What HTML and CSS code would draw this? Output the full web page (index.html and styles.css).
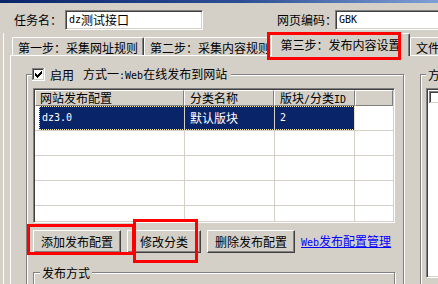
FILE: index.html
```html
<!DOCTYPE html>
<html lang="zh-CN">
<head>
<meta charset="utf-8">
<title>发布内容设置</title>
<link rel="stylesheet" href="styles.css">
</head>
<body>
<div class="titlebar"></div>
<div class="top">
  <span class="lbl lbl-task">任务名：</span>
  <div class="field in in-task"><span class="lat">dz</span>测试接口</div>
  <span class="lbl lbl-enc">网页编码：</span>
  <div class="field in in-enc"><span class="lat">GBK</span></div>
</div>
<div class="frame">
  <div class="tabs">
    <div class="tab t1">第一步：采集网址规则</div>
    <div class="tab t2">第二步：采集内容规则</div>
    <div class="tab t3">第三步：发布内容设置</div>
    <div class="tab t4">文件保存及部分高级设置</div>
  </div>
  <div class="panel">
    <fieldset class="grp main">
      <legend class="lg-main">
        <svg class="cb" width="13" height="13" viewBox="0 0 13 13">
          <rect x="0" y="0" width="13" height="13" fill="#fff"/>
          <rect x="0" y="0" width="12" height="1" fill="#808080"/>
          <rect x="0" y="0" width="1" height="12" fill="#808080"/>
          <rect x="1" y="1" width="10" height="1" fill="#404040"/>
          <rect x="1" y="1" width="1" height="10" fill="#404040"/>
          <rect x="1" y="11" width="11" height="1" fill="#d4d0c8"/>
          <rect x="11" y="1" width="1" height="11" fill="#d4d0c8"/>
          <rect x="3" y="5" width="1" height="3" fill="#000"/>
          <rect x="4" y="6" width="1" height="3" fill="#000"/>
          <rect x="5" y="7" width="1" height="3" fill="#000"/>
          <rect x="6" y="6" width="1" height="3" fill="#000"/>
          <rect x="7" y="5" width="1" height="3" fill="#000"/>
          <rect x="8" y="4" width="1" height="3" fill="#000"/>
          <rect x="9" y="3" width="1" height="3" fill="#000"/>
        </svg>
        <span class="en">启用</span>
        <span class="way">方式一<span class="lat">:Web</span>在线发布到网站</span>
      </legend>
      <div class="field list">
        <div class="lhead">
          <div class="hc h1">网站发布配置</div>
          <div class="hc h2">分类名称</div>
          <div class="hc h3">版块<span class="lat">/</span>分类<span class="lat">ID</span></div>
          <div class="hc h4"></div>
        </div>
        <div class="row sel">
          <div class="sp"></div>
          <div class="selbox">
            <div class="c c1"><span class="lat">dz3.0</span></div>
            <div class="c c2">默认版块</div>
            <div class="c c3"><span class="lat">2</span></div>
          </div>
        </div>
        <div class="row">
          <div class="sp"></div>
          <div class="selbox"><div class="c c1"></div><div class="c c2"></div><div class="c c3"></div></div>
        </div>
        <div class="row">
          <div class="sp"></div>
          <div class="selbox"><div class="c c1"></div><div class="c c2"></div><div class="c c3"></div></div>
        </div>
        <div class="row">
          <div class="sp"></div>
          <div class="selbox"><div class="c c1"></div><div class="c c2"></div><div class="c c3"></div></div>
        </div>
        <div class="row">
          <div class="sp"></div>
          <div class="selbox"><div class="c c1"></div><div class="c c2"></div><div class="c c3"></div></div>
        </div>
      </div>
      <div class="btns">
        <div class="btn b-add">添加发布配置</div>
        <div class="btn b-mod">修改分类</div>
        <div class="btn b-del">删除发布配置</div>
        <span class="link"><span class="lat">Web</span>发布配置管理</span>
      </div>
      <fieldset class="grp sub">
        <legend class="lg-sub">发布方式</legend>
      </fieldset>
    </fieldset>
    <fieldset class="grp side">
      <legend class="lg-side">方式二</legend>
      <div class="field lb">
        <svg class="cb2" width="13" height="13" viewBox="0 0 13 13">
          <rect x="0" y="0" width="13" height="13" fill="#fff"/>
          <rect x="0" y="0" width="12" height="1" fill="#808080"/>
          <rect x="0" y="0" width="1" height="12" fill="#808080"/>
          <rect x="1" y="1" width="10" height="1" fill="#404040"/>
          <rect x="1" y="1" width="1" height="10" fill="#404040"/>
          <rect x="1" y="11" width="11" height="1" fill="#d4d0c8"/>
          <rect x="11" y="1" width="1" height="11" fill="#d4d0c8"/>
        </svg>
      </div>
    </fieldset>
  </div>
</div>
<div class="mark m-tab"></div>
<div class="mark m-add"></div>
<div class="mark m-mod"></div>
</body>
</html>
```

FILE: styles.css
```css
* { box-sizing: border-box; }
html, body { margin: 0; padding: 0; overflow: hidden; }
body {
  width: 438px;
  height: 284px;
  position: relative;
  background: #d4d0c8;
  color: #000;
  font-family: "Noto Sans CJK SC", "Noto Sans", sans-serif;
  font-size: 12px;
  line-height: 14px;
}

/* half-width latin run, SimSun-like 6px advance */
.lat {
  font-family: "DejaVu Sans Mono", "Liberation Mono", monospace;
  font-size: 10px;
}

.titlebar {
  height: 3px;
  background: linear-gradient(90deg, #0a246a 0%, #2c4f94 55%, #7f9fd6 100%);
}

/* top row */
.top { display: flex; align-items: center; height: 20px; margin-top: 7px; }
.lbl { flex: none; white-space: nowrap; }
.lbl-task { margin-left: 14px; width: 51px; }
.lbl-enc { margin-left: 74px; width: 58px; }

.field {
  background: #fff;
  border: 1px solid;
  border-color: #808080 #fff #fff #808080;
  box-shadow: inset 1px 1px 0 #404040, inset -1px -1px 0 #d4d0c8;
}
.in {
  flex: none;
  height: 20px;
  display: flex;
  align-items: center;
  padding-left: 3px;
  white-space: nowrap;
}
.in-task { width: 138px; }
.in-enc { width: 140px; }

/* frame + tabs */
.frame {
  margin: 3px 0 0 3px;
  border-left: 1px solid #fff;
  padding-left: 6px;
  width: 700px;
  height: 260px;
}
.tabs { display: flex; align-items: flex-end; height: 22px; padding-left: 2px; }
.tab {
  flex: none;
  height: 18px;
  border: 1px solid;
  border-bottom: none;
  border-color: #fff #404040 transparent #fff;
  box-shadow: inset -1px 0 0 #808080;
  border-radius: 2px 2px 0 0;
  display: flex;
  align-items: center;
  justify-content: center;
  padding-top: 3px;
  white-space: nowrap;
  overflow: hidden;
}
.t1 { width: 132px; }
.t2 { width: 132px; }
.t3 {
  width: 139px;
  height: 23px;
  margin-left: -5px;
  margin-bottom: -1px;
  padding-top: 0;
  position: relative;
  z-index: 2;
  background: #d4d0c8;
}
.t4 { width: 160px; justify-content: flex-start; padding-left: 5px; }

.panel {
  display: flex;
  align-items: flex-start;
  border-top: 1px solid #fff;
  border-left: 1px solid #fff;
  padding: 12px 0 0 15px;
  height: 240px;
}

/* group boxes */
.grp {
  margin: 0;
  min-width: 0;
  flex: none;
  border: 1px solid #808080;
  box-shadow: inset 1px 1px 0 #fff, 1px 1px 0 #fff;
}
.grp > legend {
  height: 13px;
  line-height: 13px;
  background: #d4d0c8;
  white-space: nowrap;
}
.main { width: 378px; height: 300px; padding: 7px 8px 0 6px; }
.lg-main { display: flex; align-items: center; margin-left: -1px; padding: 0 4px 0 0; }
.cb { display: block; flex: none; }
.en { margin-left: 5px; }
.way { margin-left: 9px; }

/* list view */
.list { width: 362px; height: 135px; padding: 1px; overflow: hidden; }
.lhead { display: flex; height: 16px; }
.hc {
  flex: none;
  height: 16px;
  border: 1px solid;
  border-color: #fff #808080 #808080 #fff;
  background: #d4d0c8;
  line-height: 13px;
  white-space: nowrap;
}
.h1 { width: 149px; padding-left: 4px; }
.h2 { width: 90px; padding-left: 5px; }
.h3 { width: 81px; padding-left: 5px; }
.h4 { flex: 1; }

.row { display: flex; height: 25px; border-bottom: 1px solid #d4d0c8; }
.sp { width: 4px; flex: none; }
.selbox { display: flex; }
.c {
  flex: none;
  display: flex;
  align-items: center;
  border-right: 1px solid #d4d0c8;
  white-space: nowrap;
}
.c1 { width: 146px; padding-left: 3px; }
.c2 { width: 90px; padding-left: 5px; }
.c3 { width: 80px; padding-left: 5px; }
.sel .selbox {
  background: #0a246a;
  color: #fff;
  outline: 1px dotted #f4ecb0;
  outline-offset: -1px;
}

/* buttons */
.btns { display: flex; align-items: center; gap: 6px; margin-top: 7px; }
.btn {
  flex: none;
  height: 23px;
  border: 1px solid;
  border-color: #fff #404040 #404040 #fff;
  box-shadow: inset -1px -1px 0 #808080, inset 1px 1px 0 #d4d0c8;
  background: #d4d0c8;
  display: flex;
  align-items: center;
  justify-content: center;
  white-space: nowrap;
}
.b-add { width: 88px; }
.b-mod { width: 74px; }
.b-del { width: 88px; }
.link { color: #0000ff; text-decoration: underline; white-space: nowrap; }

.sub { width: 362px; height: 60px; margin-top: 13px; padding: 0 6px; }
.lg-sub { padding: 0 2px; }

.side { width: 100px; height: 300px; margin-left: 16px; padding: 7px 0 0 5px; }
.lg-side { padding: 0 2px; }
.lb { width: 80px; height: 190px; padding: 2px; }
.cb2 { display: block; }

/* red annotation boxes */
.mark { position: absolute; z-index: 5; border: 3px solid #ff0000; }
.m-tab { left: 267px; top: 32px; width: 134px; height: 28px; }
.m-add { left: 27px; top: 224px; width: 108px; height: 31px; }
.m-mod { left: 133px; top: 219px; width: 65px; height: 44px; }
```
